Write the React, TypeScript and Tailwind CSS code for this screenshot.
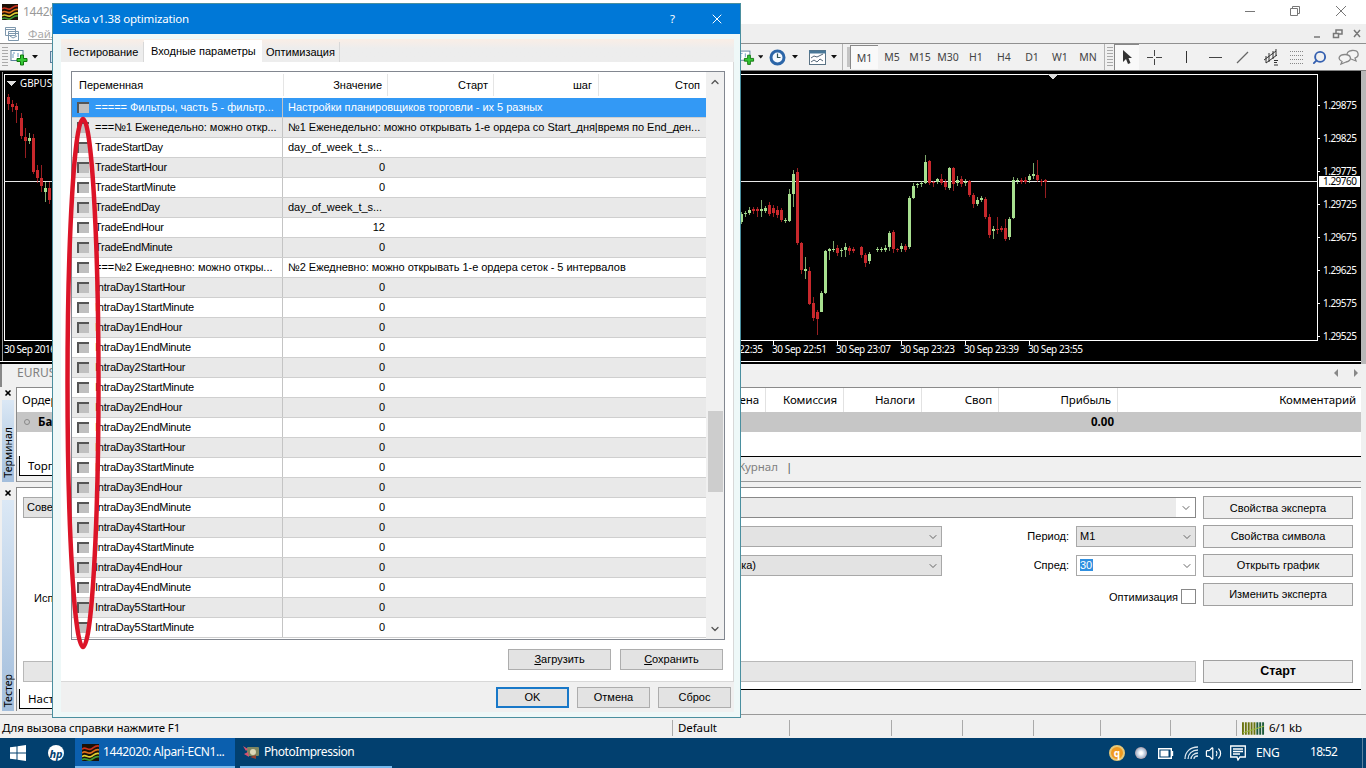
import type { ReactNode } from "react";
import { ChevronDown, ChevronUp, Search, X, Volume2 } from "lucide-react";

const UI = "font-['Noto_Sans','Open_Sans',sans-serif]";
const DLG = "font-['Liberation_Sans',Arial,sans-serif]";

// name, value, is the value a text one
const params: [string, string, boolean?][] = [
  ["===== Фильтры, часть 5 - фильтр...", "Настройки планировщиков торговли - их 5 разных", true],
  ["===№1 Еженедельно: можно откр...", "№1 Еженедельно: можно открывать 1-е ордера со Start_дня|время по End_ден...", true],
  ["TradeStartDay", "day_of_week_t_s...", true],
  ["TradeStartHour", "0"],
  ["TradeStartMinute", "0"],
  ["TradeEndDay", "day_of_week_t_s...", true],
  ["TradeEndHour", "12"],
  ["TradeEndMinute", "0"],
  ["===№2 Ежедневно: можно откры...", "№2 Ежедневно: можно открывать 1-е ордера сеток - 5 интервалов", true],
  ["IntraDay1StartHour", "0"],
  ["IntraDay1StartMinute", "0"],
  ["IntraDay1EndHour", "0"],
  ["IntraDay1EndMinute", "0"],
  ["IntraDay2StartHour", "0"],
  ["IntraDay2StartMinute", "0"],
  ["IntraDay2EndHour", "0"],
  ["IntraDay2EndMinute", "0"],
  ["IntraDay3StartHour", "0"],
  ["IntraDay3StartMinute", "0"],
  ["IntraDay3EndHour", "0"],
  ["IntraDay3EndMinute", "0"],
  ["IntraDay4StartHour", "0"],
  ["IntraDay4StartMinute", "0"],
  ["IntraDay4EndHour", "0"],
  ["IntraDay4EndMinute", "0"],
  ["IntraDay5StartHour", "0"],
  ["IntraDay5StartMinute", "0"],
];

// x, high, low, body top, body bottom, up
type Candle = [number, number, number, number, number, 0 | 1];

const candles: Candle[] = [
  [8, 94, 110, 97, 104, 0],
  [12, 100, 112, 104, 107, 0],
  [16, 103, 123, 106, 110, 0],
  [21, 113, 139, 118, 136, 0],
  [25, 128, 158, 137, 141, 0],
  [29, 133, 144, 138, 141, 1],
  [33, 134, 174, 138, 172, 0],
  [37, 165, 183, 170, 178, 0],
  [41, 165, 192, 178, 186, 0],
  [45, 182, 202, 188, 192, 1],
  [49, 182, 204, 188, 200, 0],
  [741, 212, 224, 214, 222, 1],
  [745, 211, 217, 213, 214, 1],
  [749, 207, 215, 210, 213, 1],
  [753, 207, 214, 209, 211, 0],
  [757, 207, 217, 209, 211, 0],
  [761, 200, 217, 209, 211, 1],
  [765, 206, 213, 208, 211, 1],
  [769, 202, 216, 205, 214, 0],
  [773, 205, 217, 208, 213, 0],
  [777, 206, 218, 210, 215, 0],
  [781, 208, 222, 210, 220, 0],
  [785, 218, 223, 220, 221, 1],
  [789, 189, 222, 194, 221, 1],
  [793, 170, 207, 174, 194, 1],
  [797, 168, 245, 172, 243, 0],
  [801, 242, 274, 243, 270, 0],
  [805, 257, 279, 269, 271, 1],
  [809, 267, 305, 271, 304, 0],
  [813, 297, 321, 303, 318, 0],
  [817, 310, 335, 312, 319, 0],
  [821, 291, 312, 293, 312, 1],
  [825, 250, 294, 251, 293, 1],
  [829, 248, 260, 249, 251, 1],
  [833, 241, 252, 249, 250, 1],
  [837, 245, 256, 248, 253, 0],
  [841, 248, 257, 250, 251, 1],
  [845, 243, 257, 247, 250, 1],
  [849, 246, 255, 248, 251, 0],
  [853, 247, 253, 249, 251, 0],
  [861, 246, 258, 247, 255, 0],
  [865, 253, 267, 255, 263, 0],
  [869, 252, 264, 254, 261, 1],
  [877, 247, 252, 249, 250, 1],
  [881, 247, 252, 249, 250, 1],
  [885, 245, 252, 248, 250, 1],
  [889, 231, 251, 233, 247, 1],
  [893, 230, 253, 232, 249, 0],
  [897, 248, 252, 249, 250, 0],
  [901, 243, 252, 246, 249, 1],
  [905, 244, 252, 246, 250, 0],
  [909, 196, 249, 198, 247, 1],
  [913, 183, 199, 186, 198, 1],
  [917, 183, 188, 184, 185, 1],
  [921, 181, 187, 183, 184, 1],
  [925, 155, 184, 162, 183, 1],
  [929, 160, 185, 161, 183, 0],
  [933, 181, 187, 182, 183, 0],
  [937, 178, 184, 179, 182, 1],
  [941, 174, 185, 179, 183, 0],
  [945, 179, 190, 182, 187, 0],
  [949, 167, 190, 168, 188, 1],
  [953, 167, 191, 168, 184, 0],
  [957, 176, 186, 180, 183, 1],
  [961, 176, 187, 179, 184, 0],
  [965, 179, 186, 182, 183, 1],
  [969, 180, 197, 181, 195, 0],
  [973, 193, 208, 195, 204, 0],
  [977, 197, 206, 200, 204, 1],
  [981, 196, 202, 198, 200, 1],
  [985, 197, 219, 199, 217, 0],
  [989, 214, 238, 217, 235, 0],
  [993, 226, 239, 229, 231, 1],
  [997, 217, 234, 229, 230, 0],
  [1001, 226, 232, 228, 230, 0],
  [1005, 219, 241, 228, 239, 0],
  [1009, 217, 240, 219, 237, 1],
  [1013, 177, 219, 180, 218, 1],
  [1017, 178, 184, 180, 181, 1],
  [1021, 178, 184, 180, 182, 0],
  [1025, 177, 184, 180, 182, 0],
  [1029, 174, 183, 176, 180, 1],
  [1033, 163, 179, 174, 176, 1],
  [1037, 160, 182, 175, 180, 0],
  [1041, 179, 186, 181, 182, 0],
  [1045, 179, 198, 180, 182, 0],
];

const prices = ["1.29875", "1.29825", "1.29775", "1.29725", "1.29675", "1.29625", "1.29575", "1.29525"];
const times = ["30 Sep 22:35", "30 Sep 22:51", "30 Sep 23:07", "30 Sep 23:23", "30 Sep 23:39", "30 Sep 23:55"];
const frames = ["M1", "M5", "M15", "M30", "H1", "H4", "D1", "W1", "MN"];

function Chart() {
  return (
    <div className="flex h-[293px] w-full shrink-0 bg-[#b8b8b8]">
      <svg width="1361" height="293" viewBox="0 71 1361 293" shapeRendering="crispEdges" className="bg-black">
        <path d="M4 74.5H1317.5V340.5H4.5V74" fill="none" stroke="#fff" />
        <path d="M0 361.5H1361" stroke="#fff" strokeWidth="1.5" />
        <path d="M2.5 72V361" stroke="#999" />
        <path d="M4 181.5H1317" stroke="#e8e8e8" />
        {candles.map(([x, hi, lo, top, bot, up]) => (
          <g key={x} fill={up ? "#a8e090" : "#c8282c"}>
            <rect x={x} y={hi} width="1" height={lo - hi} opacity=".75" />
            <rect x={x - 1} y={top} width="3" height={bot - top} />
          </g>
        ))}
        <path d="M7 81h9l-4.500 5z M1048 74h10l-5 6z" fill="#ddd" />
        <g fill="#fff" className={UI} fontSize="10">
          <text x="20" y="87" textLength="56" lengthAdjust="spacingAndGlyphs">GBPUSD,M1</text>
          <text x="4" y="353" textLength="52">30 Sep 2016</text>
          {times.map((t, i) => (
            <g key={t}>
              <rect x={709 + i * 64} y="341" width="1" height="4" />
              <text x={708 + i * 64} y="353" textLength="55">{t}</text>
            </g>
          ))}
          {prices.map((p, i) => (
            <g key={p}>
              <rect x="1317" y={105 + i * 33} width="3" height="1" />
              <text x="1323" y={109 + i * 33} textLength="34">{p}</text>
            </g>
          ))}
        </g>
        <rect x="1319" y="176" width="41" height="11" fill="#fff" />
        <text x="1323" y="185" fontSize="10" textLength="34" className={UI}>1.29760</text>
      </svg>
    </div>
  );
}

function Logo({ size = 16 }: { size?: number }) {
  return (
    <svg width={size} height={size} viewBox="0 0 16 16">
      <rect width="16" height="16" fill="#1c1108" />
      <g fill="none" strokeWidth="1.600">
        <path d="M0 5c3-3 5 1 8 0s4-4 8-3" stroke="#c8301c" />
        <path d="M0 8.500c3-3 5 1 8 0s4-4 8-3" stroke="#e0701c" />
        <path d="M0 12c3-3 5 1 8 0s4-4 8-3" stroke="#e0d030" />
        <path d="M0 15c3-3 5 1 8 0s4-4 8-3" stroke="#3f9a34" />
      </g>
    </svg>
  );
}

function PlusIcon() {
  return (
    <svg width="18" height="17" viewBox="0 0 18 17">
      <rect x="1" y="1.500" width="12" height="10" fill="#fff" stroke="#5b7f9c" />
      <path d="M3 4h2M3 9V5M8 8V4" stroke="#6b9ac0" />
      <path d="M10.500 6h3v3.500H17v3h-3.500V16h-3v-3.500H7v-3h3.500z" fill="#35c835" stroke="#11770f" />
    </svg>
  );
}

const Caret = () => (
  <svg width="6" height="4" viewBox="0 0 6 4"><path d="M0 0h6L3 3.500z" fill="#111" /></svg>
);

const Sep = () => <div className="h-[26px] w-px shrink-0 bg-[#b4b4b4]" />;

const Grip = () => (
  <div className="h-5 w-[6px] shrink-0 bg-[repeating-linear-gradient(#aaa_0_1px,transparent_1px_3px)]" />
);

function Tool({ w, children }: { w: string; children: ReactNode }) {
  return <div className={`flex h-[26px] shrink-0 items-center justify-center ${w}`}>{children}</div>;
}

function Toolbar() {
  return (
    <div className="flex h-7 w-full shrink-0 items-center border-t border-b border-t-[#909090] border-b-[#808080] bg-[#f1f1f1]">
      <div className="flex w-[738px] shrink-0 items-center pl-[2px]">
        <Grip />
        <div className="ml-[2px] flex items-center gap-[4px]"><PlusIcon /><Caret /></div>
        <div className="ml-3 h-3 w-4 border border-[#5b7f9c] bg-[#d5e6f2]" />
      </div>
      <Tool w="w-[25px] gap-[3px]"><PlusIcon /><Caret /></Tool>
      <Tool w="w-[41px] gap-[6px]">
        <svg width="17" height="17" viewBox="0 0 17 17">
          <circle cx="8.500" cy="8.500" r="6.500" fill="#f4f9ff" stroke="#2c66a8" strokeWidth="3" />
          <path d="M8.500 4.500v4h3" fill="none" stroke="#355" strokeWidth="1.200" />
        </svg>
        <Caret />
      </Tool>
      <Tool w="w-[38px] gap-[5px]">
        <svg width="17" height="15" viewBox="0 0 17 15">
          <rect x=".5" y=".5" width="16" height="14" fill="#fff" stroke="#5a7284" />
          <path d="M0 2h17" stroke="#4a7898" strokeWidth="3" />
          <path d="M2 8l3-2 3 1 6-3M2 12l3-2 3 2 3-3 3 2" fill="none" stroke="#567" />
        </svg>
        <Caret />
      </Tool>
      <Sep />
      <div className="ml-1 h-5 w-[3px] shrink-0 bg-[#c4c4c4]" />
      {frames.map((f, i) => (
        <div
          key={f}
          className={`flex h-[24px] w-7 shrink-0 items-center justify-center pt-[2px] text-[10.5px] text-[#444] ${
            i === 0 ? "border-t border-l border-[#888] bg-[#f9f9f9]" : ""
          }`}
        >
          {f}
        </div>
      ))}
      <div className="w-[2px] shrink-0" />
      <Sep />
      <Tool w="w-[9px]"><Grip /></Tool>
      <Tool w="w-[25px] border-t border-l border-[#888] bg-[#f9f9f9]">
        <svg width="11" height="15" viewBox="0 0 11 15"><path d="M1 0v12l3-3 2 5 2.500-1L6.500 8H10z" fill="#333" /></svg>
      </Tool>
      <Tool w="w-[31px]">
        <svg width="15" height="15" viewBox="0 0 15 15" shapeRendering="crispEdges"><path d="M7.500 0v6M7.500 9v6M0 7.500h6M9 7.500h6" stroke="#444" /></svg>
      </Tool>
      <div className="h-5 w-px bg-[#888]" />
      <Tool w="w-[32px]"><div className="h-3 w-px bg-[#333]" /></Tool>
      <Tool w="w-[26px]"><div className="h-px w-[13px] bg-[#444]" /></Tool>
      <Tool w="w-[29px]">
        <svg width="13" height="13" viewBox="0 0 13 13"><path d="M1 12L12 1" stroke="#666" strokeWidth="1.200" /></svg>
      </Tool>
      <Tool w="w-[28px]">
        <svg width="16" height="18" viewBox="0 0 16 18" fill="none" stroke="#333">
          <path d="M1 12L13 3M3 15L14 7M3 8v7M6 5v9M10 3v8M13 1v7" />
          <path d="M11 12.500h4M11 14.500h3M11 17h4" />
        </svg>
      </Tool>
      <Tool w="w-[22px]">
        <div className="grid gap-[3px]">
          {[0, 1, 2, 3].map((i) => <div key={i} className="w-[13px] border-t border-dotted border-[#888]" />)}
        </div>
      </Tool>
      <Tool w="w-[25px]"><Search className="-scale-x-100 text-[#3560b0]" size={15} strokeWidth={3} /></Tool>
      <Tool w="w-[34px]">
        <svg width="22" height="17" viewBox="0 0 22 17" fill="#f4f4f4" stroke="#888" strokeWidth="1.300">
          <path d="M13 10l5 2-1-3c5-2 4-8-3-7.500-4 .3-6 3-4.500 5.500" />
          <path d="M3 15l1-2.500C-1 10 1 5.500 7 5.500s8 6 1 7.500z" />
        </svg>
      </Tool>
    </div>
  );
}

function SidePanel({ label, className, children }: { label: string; className: string; children: ReactNode }) {
  return (
    <div className={`flex w-full shrink-0 ${className}`}>
      <div className="flex w-4 shrink-0 flex-col items-center pt-[2px]">
        <X size={8} strokeWidth={5} />
        <div className="mt-[3px] flex w-3 flex-1 items-end justify-center bg-linear-to-b from-[#dbe8f5] to-[#a3bedc] pb-[4px] text-[10.5px] leading-3">
          <span className="rotate-180 [writing-mode:vertical-rl]">{label}</span>
        </div>
      </div>
      <div className="flex w-[1345px] flex-col border-t border-l border-[#8a8a8a]">{children}</div>
    </div>
  );
}

function Combo({ className, children }: { className: string; children?: ReactNode }) {
  return (
    <div className={`flex h-[21px] items-center justify-between border border-[#a8a8a8] bg-[#e3e3e3] pr-[2px] pl-[3px] ${className}`}>
      <span>{children}</span>
      <ChevronDown size={12} strokeWidth={1.8} className="text-[#555]" />
    </div>
  );
}

function SideButton({ className = "", children }: { className?: string; children: ReactNode }) {
  return (
    <div className={`ml-[7px] flex h-[23px] w-[150px] items-center justify-center border border-[#a0a0a0] bg-[#eee] ${className}`}>
      {children}
    </div>
  );
}

const columns: [string, string][] = [
  ["Цена", "w-[744px]"],
  ["Комиссия", "w-[78px]"],
  ["Налоги", "w-[78px]"],
  ["Своп", "w-[77px]"],
  ["Прибыль", "w-[119px]"],
];

function Terminal() {
  return (
    <SidePanel label="Терминал" className="h-[95px] bg-[#f0f0f0]">
      <div className="flex h-6 shrink-0 items-center bg-white text-[11.5px] tracking-[-0.1px]">
        {columns.map(([name, w], i) => (
          <div key={name} className={`flex h-full items-center justify-between border-r border-[#e2e2e2] pr-[6px] ${w} ${i === 0 ? "ml-[5px]" : ""}`}>
            <span>{i === 0 ? "Ордер" : ""}</span>
            <span>{name}</span>
          </div>
        ))}
        <span className="ml-auto pr-[5px]">Комментарий</span>
      </div>
      <div className="flex h-5 shrink-0 items-center bg-[#c6c6c6] text-[11.5px] font-bold">
        <div className="ml-[7px] h-[6px] w-[6px] rounded-full border border-[#888]" />
        <span className="ml-2">Баланс</span>
        <span className="ml-auto pr-[247px]">0.00</span>
      </div>
      <div className="h-6 shrink-0 bg-white" />
      <div className="flex h-5 shrink-0 items-center text-[11.5px]">
        <div className="ml-[2px] flex h-full w-[70px] items-center border-b border-l border-black bg-white pl-2">Торговля</div>
        <div className="flex h-full flex-1 items-center border-t border-black text-[#808080]">
          <span className="w-[689px] text-right">Журнал</span>
          <span className="ml-[8px] text-[#555]">|</span>
        </div>
      </div>
      <div className="h-[6px] border-b border-[#999]" />
    </SidePanel>
  );
}

function Tester() {
  return (
    <SidePanel label="Тестер" className="h-[224px] bg-[#f0f0f0]">
      <div className={`flex h-[201px] shrink-0 flex-col gap-[6px] bg-white pt-2 pl-[6px] text-[11px] ${DLG}`}>
        <div className="flex h-[23px] items-center">
          <div className="flex h-[21px] w-[100px] items-center border border-[#a8a8a8] bg-[#e3e3e3] pl-[3px]">Советник</div>
          <div className="flex h-[21px] w-[1073px] items-center justify-between border border-[#888] bg-[#ebebeb]">
            <span />
            <div className="flex h-full w-[19px] items-center justify-center bg-white">
              <ChevronDown size={12} strokeWidth={1.8} className="text-[#555]" />
            </div>
          </div>
          <SideButton className="pt-px">Свойства эксперта</SideButton>
        </div>
        {/* These rows start right of the label column */}
        <div className="flex h-[23px] items-center pl-[119px]">
          <Combo className="w-[800px]" />
          <span className="w-[127px] text-right">Период:</span>
          <Combo className="ml-[7px] w-[120px]">M1</Combo>
          <SideButton>Свойства символа</SideButton>
        </div>
        <div className="flex h-[23px] items-center pl-[119px]">
          <Combo className="w-[800px] [&>span]:w-[610px] [&>span]:text-right">(оценка)</Combo>
          <span className="w-[127px] text-right">Спред:</span>
          <Combo className="ml-[7px] w-[120px] border-[#777] bg-white pl-[1px]">
            <span className="bg-[#2f8fe0] pr-[1px] text-white">30</span>
          </Combo>
          <SideButton>Открыть график</SideButton>
        </div>
        <div className="flex h-[23px] items-center">
          <span className="pt-[7px] pl-[11px]">Исполь</span>
          <span className="flex-1 pt-[6px] pr-[3px] text-right">Оптимизация</span>
          <div className="mt-[3px] h-[15px] w-[15px] border border-[#888]" />
          <div className="pr-[8px]"><SideButton>Изменить эксперта</SideButton></div>
        </div>
        <div className="mt-auto mb-[6px] flex h-[23px] items-center">
          <div className="h-[21px] w-[1173px] border border-[#b8b8b8] bg-[#e6e6e6]" />
          <SideButton className="text-[12.5px] font-bold">Старт</SideButton>
        </div>
      </div>
      <div className="flex h-5 shrink-0 text-[11.5px]">
        <div className="ml-[2px] flex w-[80px] items-center border-b border-l border-black bg-white pl-2">Настройки</div>
        <div className="flex-1 border-t border-black" />
      </div>
    </SidePanel>
  );
}

function StatusBar() {
  return (
    <div className="flex h-6 w-full shrink-0 items-center border-t border-[#999] bg-[#f0f0f0] pt-[3px] pl-[2px] text-[11.5px]">
      <span className="w-[670px] tracking-[-0.15px]">Для вызова справки нажмите F1</span>
      <span className="h-4 w-[117px] border-l border-[#aaa] pl-[5px] leading-4 tracking-[-0.1px]">Default</span>
      <span className="h-4 w-[102px] border-l border-[#aaa]" />
      <span className="h-4 w-[71px] border-l border-[#aaa]" />
      <span className="h-4 w-[71px] border-l border-[#aaa]" />
      <span className="h-4 w-[67px] border-l border-[#aaa]" />
      <span className="h-4 w-[70px] border-l border-[#aaa]" />
      <span className="h-4 w-[66px] border-l border-[#aaa]" />
      <span className="flex h-4 items-center gap-1 border-l border-[#aaa] pl-[5px] tracking-[-0.1px]">
        <svg width="23" height="13" viewBox="0 0 24 13">
          {[0, 1, 2, 3, 4, 5, 6, 7].map((i) => (
            <path key={i} d={`M${i * 3 + 1} 0V13`} stroke={i < 5 ? "#6b7410" : "#1d5a3a"} strokeWidth="2" />
          ))}
          <path d="M1 11L23 4" stroke="#9fc040" />
        </svg>
        6/1 kb
      </span>
    </div>
  );
}

function Taskbar() {
  return (
    <div className="flex h-[30px] w-full shrink-0 items-center bg-[#02406f] text-[12px] text-white">
      <svg className="ml-[10px]" width="16" height="16" viewBox="0 0 16 16" fill="#fff">
        <path d="M0 2.300l6.500-.9v6.200H0zM7.500 1.200L16 0v7.600H7.500zM0 8.500h6.500v6.100L0 13.700zM7.500 8.500H16V16l-8.500-1.200z" />
      </svg>
      <div className="ml-[22px] flex h-4 w-4 items-center justify-center rounded-full bg-white text-[11px] leading-none font-bold text-[#02406f] italic">hp</div>
      <div className="ml-[11px] flex h-full w-[160px] items-center gap-[4px] border-b-2 border-[#76b9ed] bg-[#0b5fae] pl-[7px]">
        <Logo size={17} />
        <span className="tracking-[-0.42px] whitespace-nowrap">1442020: Alpari-ECN1...</span>
      </div>
      <div className="ml-[5px] flex h-full w-[152px] items-center gap-[4px] border-b-2 border-[#76b9ed] pl-[3px]">
        <svg width="17" height="16" viewBox="0 0 17 16">
          <rect x="4" y="3" width="12" height="9" rx="1" fill="#7d8660" />
          <circle cx="10" cy="8" r="3" fill="#ddd8b8" />
          <path d="M0 2l5 3-2 2zM1 10l4-2 1 5z" fill="#d85070" />
          <path d="M7 13l6-2v4z" fill="#9a4030" />
        </svg>
        <span className="tracking-[-0.45px]">PhotoImpression</span>
      </div>
      <div className="ml-auto flex items-center">
        <div className="flex h-4 w-4 items-center justify-center rounded-full border-2 border-[#e8c878] bg-[#f09a20] text-[10px] leading-none font-bold">q</div>
        <div className="ml-[10px] h-3 w-3 rounded-full bg-[radial-gradient(#fff_15%,#b8c8dc_50%,#a86058)]" />
        <svg className="ml-[11px]" width="16" height="11" viewBox="0 0 16 11">
          <path d="M.7.700h12.600v9.600H.7zM14.500 3v5" fill="none" stroke="#fff" strokeWidth="1.400" />
          <path d="M2.500 2.500h8v6h-8z" fill="#fff" />
        </svg>
        <svg className="ml-[10px]" width="15" height="14" viewBox="0 0 15 14" fill="none" stroke="#dce6ee" strokeWidth="1.300">
          <path d="M1 13C1 6 6 1 14 1M4 13c0-5 4-9 10-9M7 13c0-3 3-6 7-6M10 13c0-2 2-3 4-3" />
        </svg>
        <Volume2 className="ml-[6px]" size={17} strokeWidth={1.7} />
        <svg className="ml-[8px]" width="16" height="16" viewBox="0 0 16 16" fill="none" stroke="#fff" strokeWidth="1.300">
          <path d="M.7 1h14.600v11H10l-2 3-1-3H.7zM3 4h10M3 6.500h10M3 9h7" />
        </svg>
        <span className="ml-[10px] w-[54px] tracking-[-0.4px]">ENG</span>
        <span className="mr-[17px] w-[35px] pb-[2px] tracking-[-0.7px]">18:52</span>
        <div className="h-[30px] w-[4px] border-l border-[#5c82a0]" />
      </div>
    </div>
  );
}

function DlgButton({ w, primary, children }: { w: string; primary?: boolean; children: ReactNode }) {
  return (
    <div className={`flex h-[21px] items-center justify-center bg-[#e3e3e3] ${w} ${primary ? "border-2 border-[#1878c8]" : "border border-[#adadad]"}`}>
      {children}
    </div>
  );
}

function ParamRow({ row, index }: { row: (typeof params)[number]; index: number }) {
  const [name, value, text] = row;
  const active = index === 0;
  const tone = active ? "bg-[#3399f5] text-white" : index % 2 ? "bg-[#e9e9e9]" : "bg-white";
  const latin = /^[A-Z]/.test(name);
  return (
    <div className={`flex h-5 items-center border-b border-[#cfcfcf] ${tone}`}>
      <div className="ml-[5px] h-[11px] w-3 shrink-0 border-t-2 border-l-2 border-[#555] bg-[#c0c0c0]" />
      <span className={`w-[193px] shrink-0 pl-[6px] whitespace-nowrap ${latin ? "tracking-[-0.25px]" : "tracking-[-0.04px]"}`}>{name}</span>
      <div className="h-full w-px shrink-0 bg-[#c4c4c4]" />
      <span className={text ? "pl-[5px] tracking-[-0.04px] whitespace-nowrap" : "w-[102px] text-right"}>{value}</span>
    </div>
  );
}

function SettingsDialog() {
  return (
    <div className={`absolute top-[3px] left-[52px] flex h-[715px] w-[689px] flex-col border border-[#4a8f9f] bg-[#eef8f8] text-[11px] ${DLG}`}>
      <div className={`flex h-[30px] shrink-0 items-center bg-[#0078d7] pl-2 text-[11.5px] text-white ${UI}`}>
        <span className="tracking-[-0.17px]">Setka v1.38 optimization</span>
        <span className="ml-auto w-[39px]">?</span>
        <X size={16} strokeWidth={1.5} className="mr-[15px]" />
      </div>
      <div className="mt-[5px] ml-2 flex h-[23px] w-[673px] shrink-0 items-end bg-linear-to-b from-[#faeee6] to-[#ededed] to-40%">
        <div className="flex h-5 w-[83px] items-center border-r border-[#d8d8d8] pl-[6px]">Тестирование</div>
        <div className="flex h-[22px] w-[118px] items-center bg-white pl-[7px]">Входные параметры</div>
        <div className="flex h-5 w-[78px] items-center border-r border-[#d8d8d8] pl-[4px]">Оптимизация</div>
      </div>
      <div className="ml-2 flex h-[620px] w-[673px] shrink-0 flex-col border-r border-b border-[#d8d8d8] bg-white pt-[9px] pl-[10px]">
        <div className="flex h-[569px] w-[654px] shrink-0 border border-[#828790]">
          <div className="w-[634px] shrink-0 overflow-hidden">
            <div className="flex h-[26px] items-center text-right">
              <span className="h-[22px] w-[212px] border-r border-[#e5e5e5] pl-[7px] text-left leading-[22px]">Переменная</span>
              <span className="h-[22px] w-[104px] border-r border-[#e5e5e5] pr-[5px] leading-[22px]">Значение</span>
              <span className="h-[22px] w-[106px] border-r border-[#e5e5e5] pr-[5px] leading-[22px]">Старт</span>
              <span className="h-[22px] w-[105px] border-r border-[#e5e5e5] pr-[6px] leading-[22px]">шаг</span>
              <span className="h-[22px] flex-1 pr-[6px] leading-[22px]">Стоп</span>
            </div>
            {params.map((row, i) => <ParamRow key={row[0]} row={row} index={i} />)}
          </div>
          <div className="flex flex-1 flex-col items-center bg-[#f0f0f0] py-[4px]">
            <ChevronUp size={12} strokeWidth={2.6} className="text-[#555]" />
            <div className="mt-[323px] h-[81px] w-[15px] bg-[#cdcdcd]" />
            <ChevronDown size={12} strokeWidth={2.6} className="mt-auto text-[#555]" />
          </div>
        </div>
        <div className="mt-[9px] flex justify-end gap-[9px] pr-[10px]">
          <DlgButton w="w-[103px]"><u>З</u>агрузить</DlgButton>
          <DlgButton w="w-[103px]"><u>С</u>охранить</DlgButton>
        </div>
      </div>
      <div className="ml-2 flex h-[30px] w-[673px] justify-end gap-2 bg-[#f0f0f0] pt-[5px] pr-[3px]">
        <DlgButton w="w-[73px]" primary>OK</DlgButton>
        <DlgButton w="w-[73px]">Отмена</DlgButton>
        <DlgButton w="w-[73px]">Сброс</DlgButton>
      </div>
    </div>
  );
}

export default function App() {
  return (
    <div className={`relative flex h-[768px] w-[1366px] flex-col overflow-hidden bg-[#f0f0f0] text-black ${UI}`}>
      {/* Window caption */}
      <div className="flex h-6 shrink-0 items-center bg-white pl-[2px] text-[12px] text-[#999]">
        <Logo />
        <span className="ml-[5px] tracking-[-0.3px]">1442020</span>
        <svg className="mr-[19px] mb-[3px] ml-auto" width="102" height="12" viewBox="0 0 102 12" fill="none" stroke="#777">
          <path d="M0 6.500h10M45.500 3.500h7v7h-7zM47.500 3V1.500h7v7H53M91 1l10 10M101 1L91 11" />
        </svg>
      </div>
      {/* Menu */}
      <div className="flex h-[19px] shrink-0 items-center bg-[#efefef] text-[11.5px] text-[#aaa]">
        <div className="flex h-full w-[90px] items-center bg-white pl-[5px]">
          <svg width="15" height="14" viewBox="0 0 15 14" fill="#fff" stroke="#7d97ad">
            <path d="M.5 .5h10v8H.5zM.5 2.500h10M3.500 4.500h10v9h-10zM3.500 6.500h10M5 9l3 2 4-2" />
          </svg>
          <span className="ml-2 underline">Файл</span>
        </div>
        <svg className="mr-[5px] ml-auto" width="48" height="12" viewBox="0 0 48 12" fill="none" stroke="#777" strokeWidth="1.500">
          <path d="M1 9h6M20.500 5.500h5v4h-5zM23 5V2h6v4h-3M41 2l6 7M47 2l-6 7" />
        </svg>
      </div>
      <Toolbar />
      <Chart />
      {/* Chart tabs */}
      <div className="flex h-[23px] w-full shrink-0 items-center border-l-2 border-[#888] pb-[5px] pl-[15px] text-[12px] text-[#808080]">
        EURUSD,H1
        <svg className="mr-[8px] ml-auto" width="24" height="8" viewBox="0 0 24 8" fill="#888"><path d="M4 0v8L0 4zM20 0v8l4-4z" /></svg>
      </div>
      <Terminal />
      <div className="h-[5px] shrink-0" />
      <Tester />
      <div className="h-[3px] shrink-0" />
      <StatusBar />
      <Taskbar />
      <SettingsDialog />
      {/* Hand-drawn marker around the checkboxes */}
      <svg className="absolute top-[110px] left-[60px]" width="46" height="545" viewBox="60 110 46 545">
        <ellipse cx="83" cy="383" rx="15.500" ry="264" fill="none" stroke="#dc1428" strokeWidth="4.500" />
      </svg>
    </div>
  );
}
